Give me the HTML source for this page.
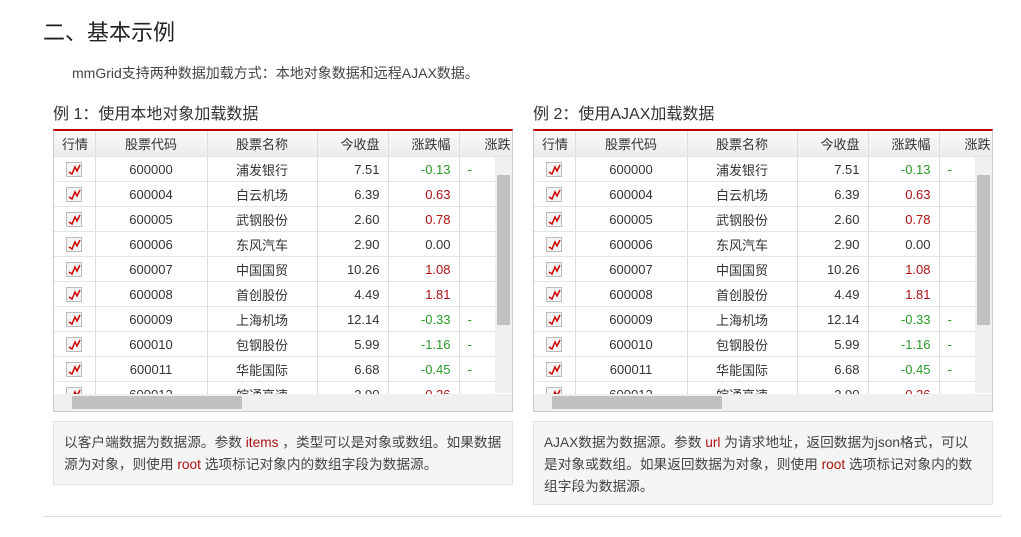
<!DOCTYPE html>
<html><head><meta charset="utf-8"><style>
body{margin:0;background:#fff;font-family:"Liberation Sans","Noto Sans CJK SC",sans-serif;color:#333;width:1021px;height:537px;overflow:hidden;position:relative}
.h2{position:absolute;left:43px;top:15px;font-size:22px;color:#222}
.sub{position:absolute;left:72px;top:63px;font-size:14px;color:#444}
.cap{position:absolute;top:100px;font-size:16px;color:#333}
.grid{position:absolute;top:129px;width:458px;height:280px;border:1px solid #ccc;border-top:2px solid #b00;overflow:hidden;background:#fff}
table{border-collapse:collapse;font-size:13px;position:absolute;left:0;top:0;table-layout:fixed;width:465px}
td,th{height:24px;border-right:1px solid #ddd;border-bottom:1px solid #e4e4e4;padding:0 8px;white-space:nowrap;overflow:hidden}
th{font-weight:normal;background:linear-gradient(#fafafa,#ececec);height:25px;color:#333}
.c{text-align:center}.r{text-align:right}
.g{color:#2a9a2a}.red{color:#b01010}
.ic{display:inline-block;width:14px;height:13px;border:1px solid #bbb;background:#f4f4f4;vertical-align:middle;position:relative}
.vs{position:absolute;right:0;top:26px;width:17px;height:236px;background:#f0f0f0}
.vs i{position:absolute;left:2px;top:18px;width:13px;height:150px;background:#c1c1c1}
.hs{position:absolute;left:0;bottom:0;width:458px;height:17px;background:#f0f0f0}
.hs i{position:absolute;left:18px;top:2px;width:170px;height:13px;background:#c1c1c1}
.info{position:absolute;top:421px;width:438px;background:#f5f5f5;border:1px solid #e3e3e3;padding:10px 10px;font-size:13.7px;line-height:22px;color:#444}
.info b{font-weight:normal;color:#b01010}
.hr{position:absolute;left:43px;top:516px;width:959px;height:1px;background:#ddd}
</style></head><body>
<div class="h2">二、基本示例</div>
<div class="sub">mmGrid支持两种数据加载方式：本地对象数据和远程AJAX数据。</div>
<div class="cap" style="left:53px">例 1：使用本地对象加载数据</div>
<div class="cap" style="left:533px">例 2：使用AJAX加载数据</div>
<div id="g1" class="grid" style="left:53px"></div>
<div id="g2" class="grid" style="left:533px"></div>
<div class="info" style="left:53px;height:42px">以客户端数据为数据源。参数 <b>items</b> ，类型可以是对象或数组。如果数据源为对象，则使用 <b>root</b> 选项标记对象内的数组字段为数据源。</div>
<div class="info" style="left:533px;height:62px">AJAX数据为数据源。参数 <b>url</b> 为请求地址，返回数据为json格式，可以是对象或数组。如果返回数据为对象，则使用 <b>root</b> 选项标记对象内的数组字段为数据源。</div>
<div class="hr"></div>
<script>
var d=[["600000","浦发银行","7.51","-0.13"],["600004","白云机场","6.39","0.63"],["600005","武钢股份","2.60","0.78"],["600006","东风汽车","2.90","0.00"],["600007","中国国贸","10.26","1.08"],["600008","首创股份","4.49","1.81"],["600009","上海机场","12.14","-0.33"],["600010","包钢股份","5.99","-1.16"],["600011","华能国际","6.68","-0.45"],["600012","皖通高速","2.90","0.26"]];
var ic='<span class="ic"><svg width="14" height="13" style="position:absolute;left:0;top:0"><polyline points="2,9 5,11 8,4 10,8 13,2" fill="none" stroke="#c00" stroke-width="1.5"/></svg></span>';
var h='<table><colgroup><col style="width:41px"><col style="width:112px"><col style="width:110px"><col style="width:71px"><col style="width:71px"><col style="width:60px"></colgroup><tr><th>行情</th><th>股票代码</th><th>股票名称</th><th class="r">今收盘</th><th class="r">涨跌幅</th><th class="r">涨跌</th></tr>';
d.forEach(function(r){var v=parseFloat(r[3]);var c=v<0?'g':(v>0?'red':'');h+='<tr><td class="c">'+ic+'</td><td class="c">'+r[0]+'</td><td class="c">'+r[1]+'</td><td class="r">'+r[2]+'</td><td class="r '+c+'">'+r[3]+'</td><td class="'+c+'">'+(v<0?'-':'')+'</td></tr>';});
h+='</table><div class="vs"><i></i></div><div class="hs"><i></i></div>';
document.getElementById('g1').innerHTML=h;document.getElementById('g2').innerHTML=h;
</script>
</body></html>
